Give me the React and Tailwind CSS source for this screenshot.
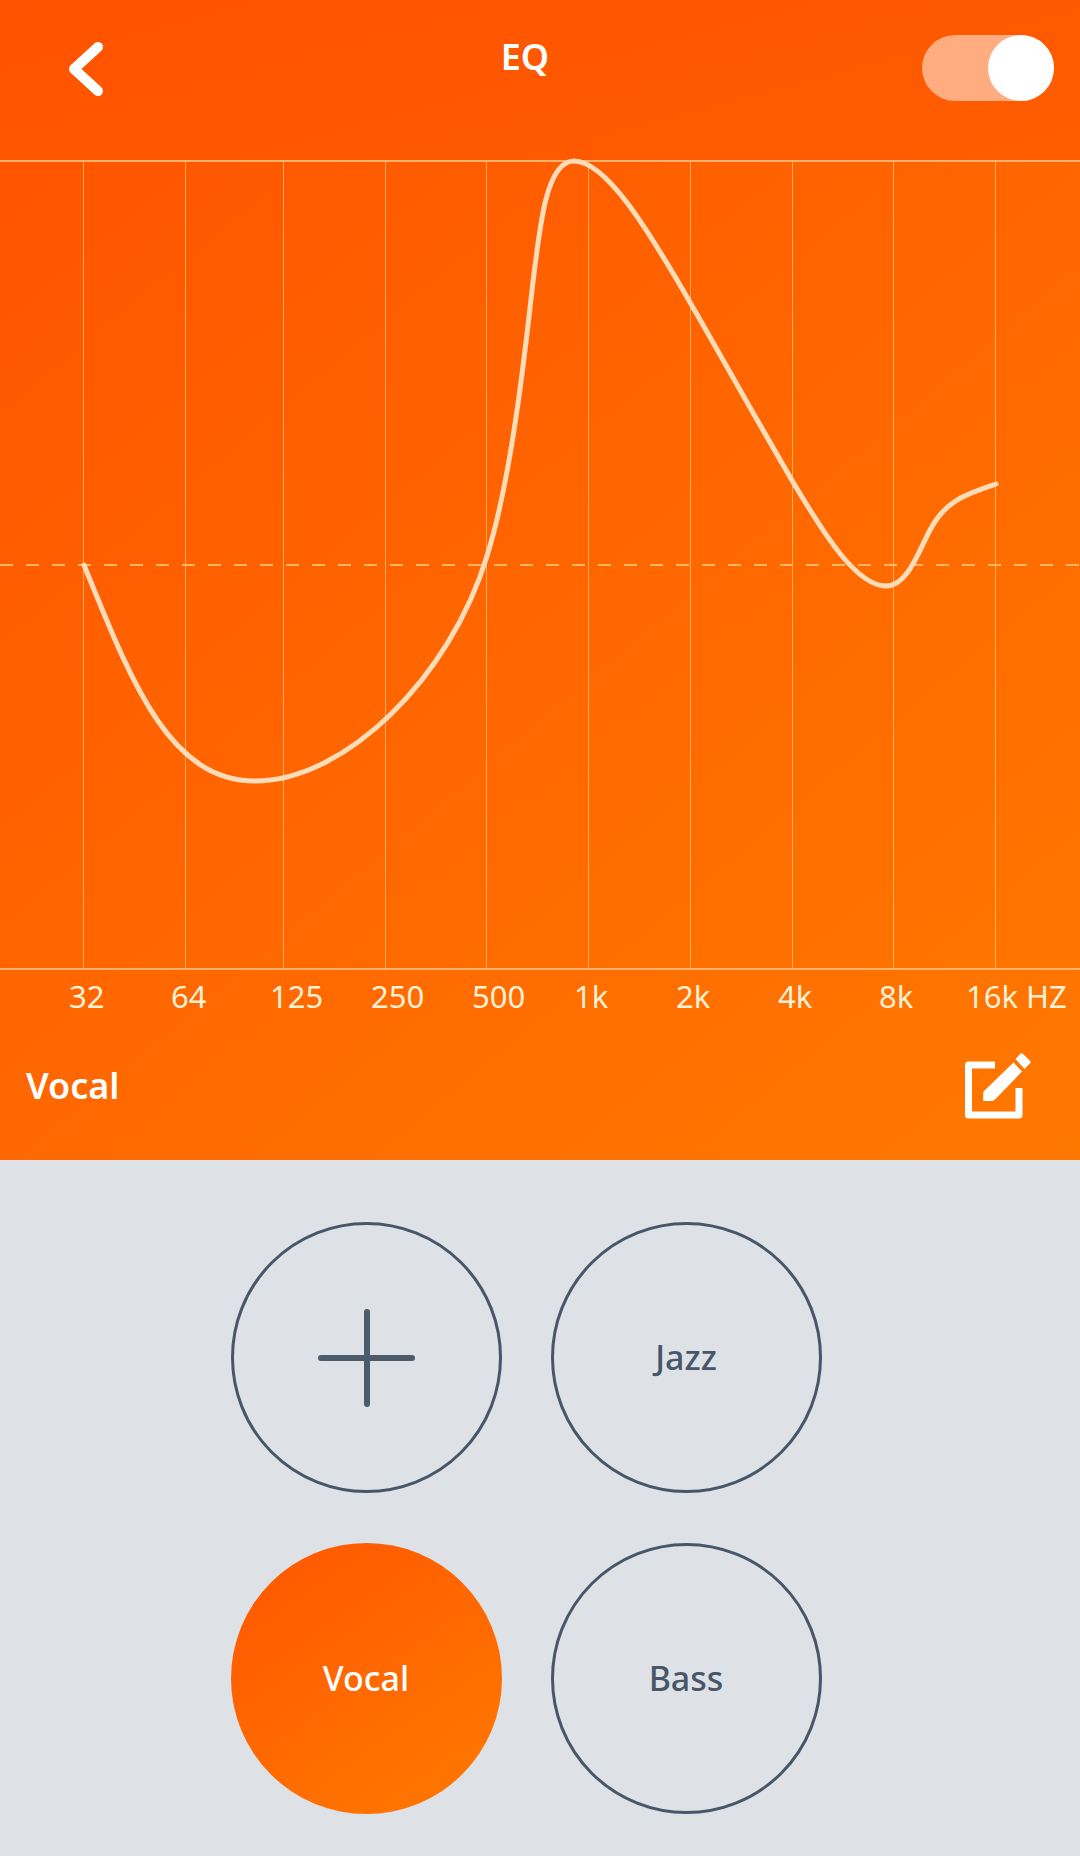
import { useState } from "react";

const bands = [
  { label: "32", line: 84, text: 69 },
  { label: "64", line: 186, text: 171 },
  { label: "125", line: 284, text: 270 },
  { label: "250", line: 386, text: 371 },
  { label: "500", line: 487, text: 472 },
  { label: "1k", line: 589, text: 574 },
  { label: "2k", line: 691, text: 676 },
  { label: "4k", line: 793, text: 778 },
  { label: "8k", line: 894, text: 879 },
  { label: "16k HZ", line: 996, text: 966 },
];

const curve =
  "M84 565C130 678 168 781 255 781C345 781 450 678 487 556C503 505 516 425 525 350C538 248 541 161 574 161C605 161 645 224 691 304C725 363 759 424 793 482C825 536 857 586 886 586C907 586 918 553 930 530C946 500 966 494 996 484";

function EqChart() {
  return (
    <svg
      viewBox="0 160 1080 860"
      className="block w-full overflow-visible"
      role="img"
      aria-label="Equalizer curve"
      fill="none"
    >
      {bands.map((band) => (
        <path
          key={band.label}
          d={`M${band.line - 0.5} 161V969`}
          stroke="#ffd08a"
          strokeOpacity="0.65"
          strokeWidth="1"
        />
      ))}
      <path d="M0 161H1080M0 969H1080" stroke="#ffb26b" strokeWidth="2" />
      <path
        d="M0 565H1080"
        stroke="#ffb766"
        strokeWidth="2"
        strokeDasharray="13 13"
      />
      <path d={curve} stroke="#ffdcb8" strokeWidth="5" strokeLinecap="round" />
      {bands.map((band) => (
        <text
          key={band.label}
          x={band.text}
          y="1008"
          fill="#fff1d6"
          className="text-[31px]"
        >
          {band.label}
        </text>
      ))}
    </svg>
  );
}

function PresetButton({ name, active, onClick, children }) {
  return (
    <button
      type="button"
      aria-label={name}
      aria-pressed={active}
      onClick={onClick}
      className={
        active
          ? "flex size-[271px] items-center justify-center rounded-full bg-linear-145 from-[#ff5500] to-[#ff7900] text-[34px] font-medium text-white cursor-pointer"
          : "flex size-[271px] items-center justify-center rounded-full border-3 border-[#48566a] text-[34px] font-medium text-[#48566a] cursor-pointer"
      }
    >
      {children}
    </button>
  );
}

export default function App() {
  const [enabled, setEnabled] = useState(true);
  const [preset, setPreset] = useState("Vocal");

  return (
    <div className="min-h-screen bg-[#dee2e7] font-['Noto_Sans','Open_Sans',sans-serif]">
      <header className="flex h-[160px] items-start justify-between bg-linear-165 from-[#ff5200] to-[#ff5d00] pt-[35px] pr-[26px] pl-[66px]">
        <button
          type="button"
          aria-label="Back"
          className="flex h-[68px] w-[62px] items-center cursor-pointer"
        >
          <svg width="38" height="56" viewBox="0 0 38 56" fill="none">
            <path
              d="M32 6L8 28L32 50"
              stroke="white"
              strokeWidth="10"
              strokeLinecap="round"
              strokeLinejoin="round"
            />
          </svg>
        </button>
        <h1 className="text-4xl/11 font-semibold text-white">EQ</h1>
        <input
          type="checkbox"
          role="switch"
          aria-label="Equalizer"
          checked={enabled}
          onChange={(e) => setEnabled(e.target.checked)}
          className="h-[66px] w-[132px] appearance-none rounded-full bg-white/50 before:block before:size-[66px] before:rounded-full before:bg-white checked:before:ml-auto cursor-pointer"
        />
      </header>

      <section className="bg-linear-140 from-[#ff5400] to-[#ff7800]">
        <EqChart />

        <div className="flex h-[140px] items-center justify-between pr-12 pb-2 pl-[26px]">
          <h2 className="text-4xl/11 font-semibold text-white">{preset}</h2>
          <button type="button" aria-label="Edit preset" className="cursor-pointer">
            <svg width="70" height="70" viewBox="0 0 70 70" fill="none">
              <path
                d="M33 14H6.500V64H57V37"
                stroke="white"
                strokeWidth="7"
                strokeLinejoin="round"
              />
              <path
                d="M51.500 11.500L60 20.500L32.500 49Q31 50 29 50H21.200V42Q21.200 40.500 22.500 39.500Z"
                fill="white"
              />
              <path
                d="M53.500 8L58 3Q59.500 1.500 61 3L68 9.800Q69.200 11 68 12.500L62.500 18Z"
                fill="white"
              />
            </svg>
          </button>
        </div>
      </section>

      <main className="flex justify-center pt-[62px] pr-7 pb-[41px]">
        <div className="grid grid-cols-2 gap-x-[49px] gap-y-[50px]">
          <PresetButton name="Add preset">
            <svg width="98" height="98" viewBox="0 0 98 98" fill="none">
              <path
                d="M50 3V95M4 49H95"
                stroke="#4d5c6b"
                strokeWidth="6"
                strokeLinecap="round"
              />
            </svg>
          </PresetButton>
          {["Jazz", "Vocal", "Bass"].map((name) => (
            <PresetButton
              key={name}
              name={name}
              active={preset === name}
              onClick={() => setPreset(name)}
            >
              {name}
            </PresetButton>
          ))}
        </div>
      </main>
    </div>
  );
}
